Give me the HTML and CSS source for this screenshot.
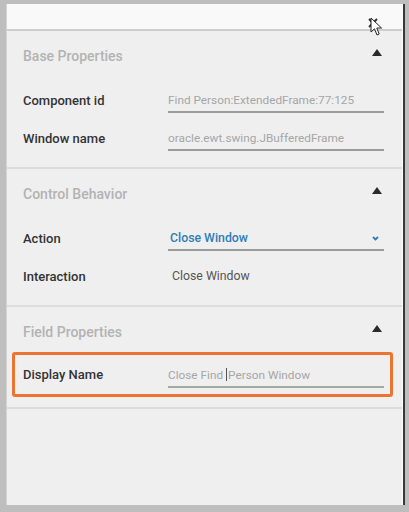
FILE: index.html
```html
<!DOCTYPE html>
<html lang="en">
<head>
    <meta charset="UTF-8">
    <meta name="viewport" content="width=device-width, initial-scale=1.0">
    <title>Properties</title>
    <link rel="stylesheet" href="styles.css">
</head>
<body>
<div class="window">
    <div class="panel">
        <div class="topbar">
            <span class="close">
                <svg width="10" height="10" viewBox="0 0 10 10"><path d="M1 1L9 9M9 1L1 9" stroke="#2b2b2b" stroke-width="1.8" fill="none"/></svg>
            </span>
            <svg class="cursor" width="13" height="20" viewBox="0 0 13 20"><path d="M1 1L1 15L4.5 11.8L7 18L9.2 17L6.8 11L11.5 11Z" fill="#fff" stroke="#222" stroke-width="1" stroke-linejoin="round"/></svg>
        </div>

        <section class="group">
            <div class="group-head">
                <h2>Base Properties</h2>
                <span class="toggle"></span>
            </div>
            <div class="row">
                <label>Component id</label>
                <div class="field">Find Person:ExtendedFrame:77:125</div>
            </div>
            <div class="row">
                <label>Window name</label>
                <div class="field">oracle.ewt.swing.JBufferedFrame</div>
            </div>
        </section>

        <section class="group">
            <div class="group-head">
                <h2>Control Behavior</h2>
                <span class="toggle"></span>
            </div>
            <div class="row">
                <label>Action</label>
                <div class="field select">
                    <span>Close Window</span>
                    <svg width="7" height="5" viewBox="0 0 7 5"><path d="M1 1L3.5 3.5L6 1" stroke="#2f7db8" stroke-width="1.8" fill="none"/></svg>
                </div>
            </div>
            <div class="row">
                <label>Interaction</label>
                <div class="plain">Close Window</div>
            </div>
        </section>

        <section class="group">
            <div class="group-head">
                <h2>Field Properties</h2>
                <span class="toggle"></span>
            </div>
            <div class="row highlight">
                <label>Display Name</label>
                <div class="field display">Close Find<span class="caret"></span>Person Window</div>
            </div>
        </section>
    </div>
</div>
</body>
</html>
```
FILE: styles.css
```css
body {
    margin: 0;
    height: 512px;
    background-color: #bebebe;
    font-family: Roboto, "Liberation Sans", sans-serif;
    overflow: hidden;
}

.window {
    margin: 4px 4px 0 6px;
    height: 501px;
    border-left: 1px solid #d4d4d4;
    border-right: 2px solid #383838;
}
.panel {
    height: 100%;
    background-color: #efefef;
    border-right: 1px solid #fbfbfb;
}

.topbar {
    position: relative;
    height: 25px;
    background-color: #f9f9f9;
    border-bottom: 2px solid #cdcdcd;
}
.close {
    position: absolute;
    left: 361px;
    top: 9px;
}
.cursor {
    position: absolute;
    left: 363px;
    top: 13px;
}

.group {
    border-bottom: 2px solid #dcdcdc;
    padding-bottom: 10px;
}
.group-head {
    display: flex;
    justify-content: space-between;
    align-items: center;
    height: 50px;
    padding: 0 20px 0 16px;
}
.group-head h2 {
    margin: 0;
    font-size: 14px;
    font-weight: 500;
    color: #b3b3b3;
}
.toggle {
    width: 0;
    height: 0;
    margin-top: -8px;
    border-left: 5px solid transparent;
    border-right: 5px solid transparent;
    border-bottom: 7px solid #2a2a2a;
}

.row {
    display: grid;
    grid-template-columns: 145px 216px;
    align-items: center;
    height: 38px;
    padding-left: 16px;
}
.row label {
    font-size: 13px;
    font-weight: 500;
    color: #333;
}
.field {
    display: flex;
    align-items: center;
    justify-content: space-between;
    height: 22px;
    margin-top: 2px;
    border-bottom: 2px solid #9c9c9c;
    font-size: 11.8px;
    color: #a6a6a6;
}
.select span {
    color: #2f7db8;
    font-size: 12.3px;
    font-weight: 500;
    padding-left: 2px;
}
.select svg {
    margin-right: 5px;
}
.plain {
    padding-left: 4px;
    font-size: 12.3px;
    color: #555;
}

.highlight {
    margin: -5px 9px 0 5px;
    height: 39px;
    padding-left: 8px;
    border: 3px solid #ea7430;
    border-radius: 3px;
}
.display {
    display: block;
    line-height: 22px;
    border-bottom-color: #a2aaa2;
}
.caret {
    display: inline-block;
    width: 1px;
    height: 13px;
    margin: 0 1px 0 3px;
    vertical-align: -2px;
    background-color: #555;
}
```
